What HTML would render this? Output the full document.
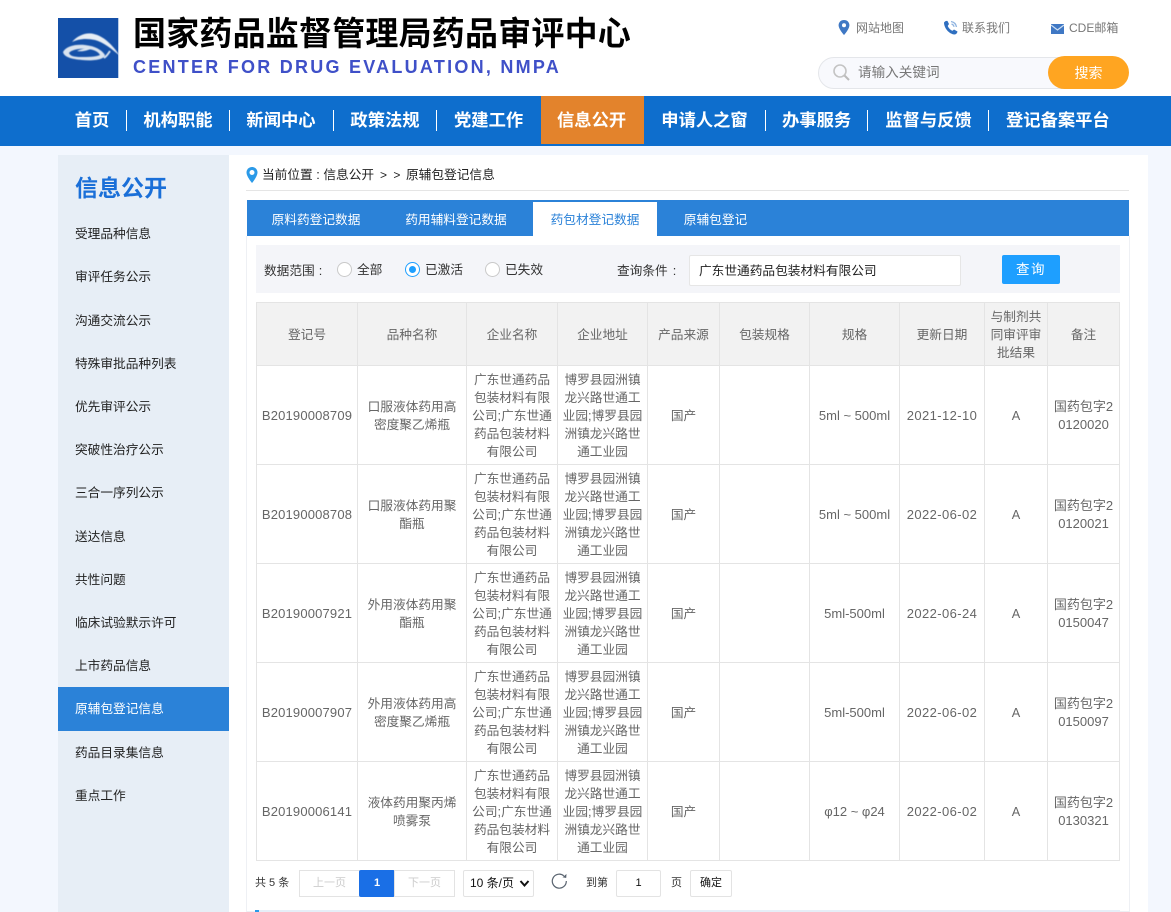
<!DOCTYPE html>
<html lang="zh-CN"><head><meta charset="utf-8"><title>信息公开</title>
<style>
*{box-sizing:border-box;margin:0;padding:0}
html,body{width:1171px;height:912px;overflow:hidden;background:#f3f7fe}
body{position:relative;font-family:"Liberation Sans","Noto Sans CJK SC",sans-serif;font-size:12.7px;color:#666}
.a{position:absolute;white-space:nowrap}
#hd{position:absolute;left:0;top:0;width:1171px;height:96px;background:#fff}
#nav{position:absolute;left:0;top:96px;width:1171px;height:50px;background:#0e6ecd}
.n{position:absolute;top:0;height:50px;line-height:49px;color:#fff;font-size:17.3px;font-weight:700;text-align:center;white-space:nowrap}
.s{position:absolute;top:14px;width:1px;height:21px;background:#fff}
#side{position:absolute;left:58px;top:155px;width:171px;height:757px;background:#e7eef6}
.m{position:absolute;left:17px;color:#222;font-size:12.7px;line-height:20px;white-space:nowrap}
#main{position:absolute;left:229px;top:155px;width:919px;height:757px;background:#fff}
#tabs{position:absolute;left:247px;top:200px;width:882px;height:36px;background:#2b82d8}
.t{position:absolute;top:0;height:36px;line-height:40px;color:#fff;text-align:center;white-space:nowrap}
table{position:absolute;left:256px;top:302px;width:863px;height:559px;border-collapse:collapse;table-layout:fixed;background:#fff}
td,th{border:1px solid #e4e4e4;text-align:center;vertical-align:middle;font-weight:400;font-size:12.7px;line-height:18px;color:#666;word-break:break-all;padding:2px 3px 0}
th{background:#f2f2f2}
.tr1{height:63px}.r{height:99px}
.c{letter-spacing:.17px;font-size:13px;white-space:nowrap}
.d{letter-spacing:.4px;font-size:13px;white-space:nowrap}
.g{font-size:13px;white-space:nowrap}
.b{font-size:13px;padding-left:5px;padding-right:5px}
.pg{position:absolute;top:870px;height:27px;border:1px solid #e3e3e3;background:#fff;line-height:25px;text-align:center;font-size:11px;color:#ccc;white-space:nowrap}
</style></head><body>
<div id="hd"></div>
<svg class="a" style="left:58px;top:18px" width="62" height="60" viewBox="0 0 62 60"><rect width="60" height="60" fill="#1450a8"/><rect x="60" width="1" height="60" fill="#b9cde8"/><g style="filter:blur(.45px)"><path d="M14 24C20 17 29 14 36 16C45 18 54 26 62 38C54 31 45 24 37 22C28 20 20 21 14 24Z" fill="#e6edf5"/><path d="M5 34C8 28 18 26 27 27C36 28 43 31 47 37C46 42 35 43 24 42C13 41 6 39 5 34Z" fill="#d9e3ef"/><path d="M11 35C13 32 21 30 28 31C34 31 40 33 42 37C38 39 30 39 23 39C16 39 12 38 11 35Z" fill="#1450a8"/><path d="M19 33C23 31 29 30 33 31C29 32 26 34 19 33Z" fill="#dfe8f2"/><path d="M46 40C49 38 50 36 52 33" fill="none" stroke="#dfe8f2" stroke-width="1.800"/></g></svg>
<div class="a" style="left:133px;top:13px;font-size:33px;font-weight:700;color:#000;line-height:42px;letter-spacing:.2px">国家药品监督管理局药品审评中心</div>
<div class="a" style="left:133px;top:55px;font-size:18px;font-weight:700;color:#3f50c8;line-height:24px;letter-spacing:2.25px">CENTER FOR DRUG EVALUATION, NMPA</div>

<svg class="a" style="left:838px;top:20px" width="12" height="15" viewBox="0 0 12 15"><path d="M6 0C2.7 0 .6 2.4.6 5.2C.6 9 6 15 6 15S11.400 9 11.400 5.200C11.400 2.400 9.300 0 6 0Z" fill="#3f78c4"/><circle cx="6" cy="5.200" r="2" fill="#fff"/></svg>
<div class="a" style="left:856px;top:19px;font-size:12px;line-height:18px;color:#777">网站地图</div>
<svg class="a" style="left:943px;top:20px" width="16" height="15" viewBox="0 0 16 15"><path d="M1 2.500C2 1 3.500.5 4.500 1L6 4C5.500 5 4.800 5.500 4.800 6C5.500 8 7.500 10 9.500 10.800L11 9.500L14.500 11.500C14.300 13 13 14.500 11.500 14.500C6 14 1 8 1 2.500Z" fill="#2f6fc0"/><path d="M8 1.500C11 2 13 4 13.500 7M8.500 4C10 4.500 10.800 5.400 11 6.800" fill="none" stroke="#8fb4e0" stroke-width="1.300"/></svg>
<div class="a" style="left:962px;top:19px;font-size:12px;line-height:18px;color:#777">联系我们</div>
<svg class="a" style="left:1051px;top:24px" width="13" height="10" viewBox="0 0 13 10"><rect width="13" height="10" fill="#3f78c4"/><path d="M0 1L6.500 6L13 1" fill="none" stroke="#cfe0f4" stroke-width="1.200"/></svg>
<div class="a" style="left:1069px;top:19px;font-size:12px;line-height:18px;color:#777">CDE邮箱</div>

<div class="a" style="left:818px;top:57px;width:300px;height:32px;border:1px solid #e4e6ea;border-radius:16px;background:#f8f9fd"></div>
<svg class="a" style="left:832px;top:63px" width="19" height="19" viewBox="0 0 19 19"><circle cx="8" cy="8" r="6" fill="none" stroke="#c4c4c4" stroke-width="1.600"/><path d="M12.500 12.500L17 17" stroke="#bbb" stroke-width="2"/></svg>
<div class="a" style="left:858px;top:64px;line-height:18px;color:#777;font-size:13.6px">请输入关键词</div>
<div class="a" style="left:1048px;top:56px;width:81px;height:33px;border-radius:17px;background:#ffa521;color:#fff;text-align:center;line-height:34px;font-size:14px">搜索</div>

<div id="nav">
<div class="n" style="left:74px;width:36px">首页</div><div class="s" style="left:126px"></div>
<div class="n" style="left:143px;width:70px">机构职能</div><div class="s" style="left:229px"></div>
<div class="n" style="left:246px;width:70px">新闻中心</div><div class="s" style="left:333px"></div>
<div class="n" style="left:350px;width:70px">政策法规</div><div class="s" style="left:436px"></div>
<div class="n" style="left:454px;width:69px">党建工作</div>
<div class="a" style="left:541px;top:0;width:103px;height:48px;background:#e3832c"></div>
<div class="n" style="left:557px;width:69px">信息公开</div>
<div class="n" style="left:661px;width:87px">申请人之窗</div><div class="s" style="left:765px"></div>
<div class="n" style="left:782px;width:69px">办事服务</div><div class="s" style="left:867px"></div>
<div class="n" style="left:885px;width:87px">监督与反馈</div><div class="s" style="left:988px"></div>
<div class="n" style="left:1006px;width:103px">登记备案平台</div>
</div>

<div id="side">
<div class="a" style="left:17px;top:18px;font-size:23px;font-weight:700;color:#1a6fd8;line-height:30px">信息公开</div>
<div class="m" style="top:69px">受理品种信息</div>
<div class="m" style="top:112px">审评任务公示</div>
<div class="m" style="top:156px">沟通交流公示</div>
<div class="m" style="top:199px">特殊审批品种列表</div>
<div class="m" style="top:242px">优先审评公示</div>
<div class="m" style="top:285px">突破性治疗公示</div>
<div class="m" style="top:328px">三合一序列公示</div>
<div class="m" style="top:372px">送达信息</div>
<div class="m" style="top:415px">共性问题</div>
<div class="m" style="top:458px">临床试验默示许可</div>
<div class="m" style="top:501px">上市药品信息</div>
<div class="a" style="left:0;top:532px;width:171px;height:44px;background:#2b82d8"></div>
<div class="m" style="top:544px;color:#fff">原辅包登记信息</div>
<div class="m" style="top:588px">药品目录集信息</div>
<div class="m" style="top:631px">重点工作</div>
</div>

<div id="main"></div>
<svg class="a" style="left:246px;top:167px" width="12" height="16" viewBox="0 0 12 16"><path d="M6 0C2.700 0 .5 2.500.5 5.500C.5 9.500 6 16 6 16S11.500 9.500 11.500 5.500C11.500 2.500 9.300 0 6 0Z" fill="#2b9ae8"/><circle cx="6" cy="5.500" r="2.500" fill="#fff"/></svg>
<div class="a" style="left:262px;top:165px;color:#222;line-height:20px">当前位置 : 信息公开</div>
<div class="a" style="left:380px;top:165px;color:#222;line-height:20px;font-size:12px;word-spacing:3px">&gt; &gt;</div>
<div class="a" style="left:406px;top:165px;color:#222;line-height:20px">原辅包登记信息</div>
<div class="a" style="left:246px;top:190px;width:883px;height:1px;background:#e5e5e5"></div>

<div class="a" style="left:246px;top:236px;width:884px;height:676px;border:1px solid #eef0f4;border-top:0"></div>
<div id="tabs">
<div class="t" style="left:24px;width:90px">原料药登记数据</div>
<div class="t" style="left:158px;width:102px">药用辅料登记数据</div>
<div class="a" style="left:286px;top:2px;width:124px;height:34px;background:#fff"></div>
<div class="t" style="left:286px;width:124px;color:#2b82d8">药包材登记数据</div>
<div class="t" style="left:436px;width:65px">原辅包登记</div>
</div>

<div class="a" style="left:256px;top:245px;width:864px;height:48px;background:#f4f5f9"></div>
<div class="a" style="left:264px;top:261px;color:#333;line-height:20px">数据范围<span style="margin-left:4px">:</span></div>
<div class="a" style="left:337px;top:262px;width:15px;height:15px;border:1px solid #c9c9c9;border-radius:50%;background:#fff"></div>
<div class="a" style="left:357px;top:260px;color:#333;line-height:20px">全部</div>
<div class="a" style="left:405px;top:262px;width:15px;height:15px;border:1px solid #1e9fff;border-radius:50%;background:#fff"></div>
<div class="a" style="left:409px;top:266px;width:7px;height:7px;border-radius:50%;background:#1e9fff"></div>
<div class="a" style="left:425px;top:260px;color:#333;line-height:20px">已激活</div>
<div class="a" style="left:485px;top:262px;width:15px;height:15px;border:1px solid #c9c9c9;border-radius:50%;background:#fff"></div>
<div class="a" style="left:505px;top:260px;color:#333;line-height:20px">已失效</div>
<div class="a" style="left:617px;top:261px;color:#333;line-height:20px">查询条件<span style="margin-left:5px">:</span></div>
<div class="a" style="left:689px;top:255px;width:272px;height:31px;background:#fff;border:1px solid #e6e6e6;border-radius:2px;padding-left:9px;line-height:31px;color:#222">广东世通药品包装材料有限公司</div>
<div class="a" style="left:1002px;top:255px;width:58px;height:29px;background:#1e9fff;border-radius:2px;color:#fff;text-align:center;line-height:29px;font-size:13.5px;letter-spacing:1.5px">查询</div>

<table>
<colgroup><col style="width:101px"><col style="width:109px"><col style="width:91px"><col style="width:90px"><col style="width:72px"><col style="width:90px"><col style="width:90px"><col style="width:85px"><col style="width:63px"><col style="width:72px"></colgroup>
<tr class="tr1"><th>登记号</th><th>品种名称</th><th>企业名称</th><th>企业地址</th><th>产品来源</th><th>包装规格</th><th>规格</th><th>更新日期</th><th>与制剂共<br>同审评审<br>批结果</th><th>备注</th></tr>
<tr class="r"><td class="c">B20190008709</td><td>口服液体药用高<br>密度聚乙烯瓶</td><td>广东世通药品<br>包装材料有限<br>公司;广东世通<br>药品包装材料<br>有限公司</td><td>博罗县园洲镇<br>龙兴路世通工<br>业园;博罗县园<br>洲镇龙兴路世<br>通工业园</td><td>国产</td><td></td><td class="g">5ml ~ 500ml</td><td class="d">2021-12-10</td><td>A</td><td class="b">国药包字2<br>0120020</td></tr>
<tr class="r"><td class="c">B20190008708</td><td>口服液体药用聚<br>酯瓶</td><td>广东世通药品<br>包装材料有限<br>公司;广东世通<br>药品包装材料<br>有限公司</td><td>博罗县园洲镇<br>龙兴路世通工<br>业园;博罗县园<br>洲镇龙兴路世<br>通工业园</td><td>国产</td><td></td><td class="g">5ml ~ 500ml</td><td class="d">2022-06-02</td><td>A</td><td class="b">国药包字2<br>0120021</td></tr>
<tr class="r"><td class="c">B20190007921</td><td>外用液体药用聚<br>酯瓶</td><td>广东世通药品<br>包装材料有限<br>公司;广东世通<br>药品包装材料<br>有限公司</td><td>博罗县园洲镇<br>龙兴路世通工<br>业园;博罗县园<br>洲镇龙兴路世<br>通工业园</td><td>国产</td><td></td><td class="g">5ml-500ml</td><td class="d">2022-06-24</td><td>A</td><td class="b">国药包字2<br>0150047</td></tr>
<tr class="r"><td class="c">B20190007907</td><td>外用液体药用高<br>密度聚乙烯瓶</td><td>广东世通药品<br>包装材料有限<br>公司;广东世通<br>药品包装材料<br>有限公司</td><td>博罗县园洲镇<br>龙兴路世通工<br>业园;博罗县园<br>洲镇龙兴路世<br>通工业园</td><td>国产</td><td></td><td class="g">5ml-500ml</td><td class="d">2022-06-02</td><td>A</td><td class="b">国药包字2<br>0150097</td></tr>
<tr class="r"><td class="c">B20190006141</td><td>液体药用聚丙烯<br>喷雾泵</td><td>广东世通药品<br>包装材料有限<br>公司;广东世通<br>药品包装材料<br>有限公司</td><td>博罗县园洲镇<br>龙兴路世通工<br>业园;博罗县园<br>洲镇龙兴路世<br>通工业园</td><td>国产</td><td></td><td class="g">φ12 ~ φ24</td><td class="d">2022-06-02</td><td>A</td><td class="b">国药包字2<br>0130321</td></tr>
</table>

<div class="a" style="left:255px;top:875px;font-size:11px;line-height:16px;color:#333">共 5 条</div>
<div class="pg" style="left:299px;width:61px">上一页</div>
<div class="pg" style="left:359px;width:36px;background:#1a6fe6;border-color:#1a6fe6;color:#fff;border-radius:2px;font-weight:700">1</div>
<div class="pg" style="left:394px;width:61px">下一页</div>
<div class="pg" style="left:463px;width:71px;color:#111;font-size:12px;text-align:left;padding-left:6px;border-radius:2px">10 条/页</div>
<svg class="a" style="left:519px;top:879px" width="11" height="9" viewBox="0 0 11 9"><path d="M1.500 2L5.500 6.500L9.500 2" fill="none" stroke="#111" stroke-width="2"/></svg>
<svg class="a" style="left:551px;top:873px" width="17" height="17" viewBox="0 0 17 17"><path d="M12.800 2.800A7 7 0 1 0 15.300 8" fill="none" stroke="#5a6470" stroke-width="1.200"/><path d="M15.500 1L15.200 5L11.500 4.200Z" fill="#5a6470"/></svg>
<div class="a" style="left:586px;top:875px;font-size:11px;line-height:16px;color:#333">到第</div>
<div class="pg" style="left:616px;width:45px;color:#111;border-radius:2px">1</div>
<div class="a" style="left:671px;top:875px;font-size:11px;line-height:16px;color:#333">页</div>
<div class="pg" style="left:690px;width:42px;color:#111;border-radius:2px">确定</div>
<div class="a" style="left:255px;top:910px;width:865px;height:2px;background:#e6eef7"></div>
<div class="a" style="left:255px;top:910px;width:4px;height:2px;background:#2b9ae8"></div>
</body></html>
